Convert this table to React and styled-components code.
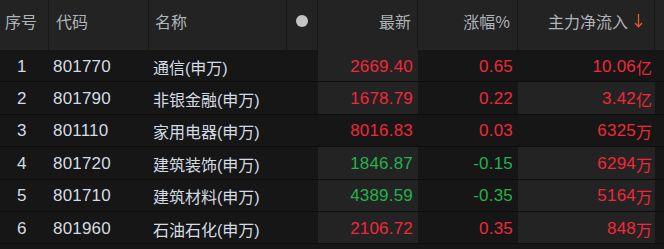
import React from "react";
import styled, { createGlobalStyle } from "styled-components";

const GlobalStyle = createGlobalStyle`
  body {
    margin: 0;
    background: #161616;
    font-family: "Liberation Sans", "Noto Sans CJK SC", sans-serif;
  }
`;

const COLS = "49px 100px 138px 31px 100px 100px 137px 9px";

const Table = styled.div`
  width: 664px;
  height: 249px;
  background: #161616;
  overflow: hidden;
`;

const HeadRow = styled.div`
  display: grid;
  grid-template-columns: ${COLS};
  height: 50px;
  background: #232323;
`;

const HeadCell = styled.div`
  display: flex;
  align-items: center;
  justify-content: ${(p) => (p.$right ? "flex-end" : p.$center ? "center" : "flex-start")};
  padding: 0 ${(p) => p.$pr || 0}px 9px ${(p) => p.$pl || 0}px;
  border-right: ${(p) => (p.$last ? "none" : "1px solid #181818")};
  color: #aeb4ba;
  font-size: 16px;
  font-family: "Noto Sans CJK SC", sans-serif;
  box-sizing: border-box;
  gap: 6px;
`;

const Dot = styled.span`
  width: 12px;
  height: 12px;
  border-radius: 50%;
  background: #c4c4c4;
`;

const Row = styled.div`
  display: grid;
  grid-template-columns: ${COLS};
  height: 32.4px;
  box-sizing: border-box;
  border-bottom: 1px solid #0e0e0e;
`;

const Cell = styled.div`
  display: flex;
  align-items: center;
  justify-content: ${(p) => (p.$right ? "flex-end" : "flex-start")};
  padding: 2px ${(p) => p.$pr || 0}px 0 ${(p) => p.$pl || 0}px;
  background: ${(p) => (p.$hl ? "#232323" : "transparent")};
  color: ${(p) => p.$color || "#d4dbe3"};
  font-size: 17px;
  letter-spacing: 0.2px;
  white-space: nowrap;
  box-sizing: border-box;
`;

const Name = styled(Cell)`
  font-size: 16px;
  letter-spacing: 0;
`;

const Unit = styled.span`
  font-size: 16px;
  font-family: "Noto Sans CJK SC", sans-serif;
  letter-spacing: 0;
`;

const RED = "#f0283a";
const GREEN = "#22b24c";

const rows = [
  { n: 1, code: "801770", name: "通信(申万)", price: "2669.40", pct: "0.65", flow: "10.06", unit: "亿", hlP: true, hlF: false },
  { n: 2, code: "801790", name: "非银金融(申万)", price: "1678.79", pct: "0.22", flow: "3.42", unit: "亿", hlP: true, hlF: true },
  { n: 3, code: "801110", name: "家用电器(申万)", price: "8016.83", pct: "0.03", flow: "6325", unit: "万", hlP: false, hlF: false },
  { n: 4, code: "801720", name: "建筑装饰(申万)", price: "1846.87", pct: "-0.15", flow: "6294", unit: "万", hlP: true, hlF: true },
  { n: 5, code: "801710", name: "建筑材料(申万)", price: "4389.59", pct: "-0.35", flow: "5164", unit: "万", hlP: true, hlF: true },
  { n: 6, code: "801960", name: "石油石化(申万)", price: "2106.72", pct: "0.35", flow: "848", unit: "万", hlP: true, hlF: true },
];

const DownArrow = () => (
  <svg width="9" height="15" viewBox="0 0 9 15" fill="none" stroke="#f0582a" strokeWidth="1.3">
    <path d="M4.5 1 V13.5" />
    <path d="M1 10 L4.5 13.8 L8 10" />
  </svg>
);

export default function App() {
  return (
    <>
      <GlobalStyle />
      <Table>
        <HeadRow>
          <HeadCell $pl={5}>序号</HeadCell>
          <HeadCell $pl={7}>代码</HeadCell>
          <HeadCell $pl={6}>名称</HeadCell>
          <HeadCell $center>
            <Dot />
          </HeadCell>
          <HeadCell $right $pr={6}>最新</HeadCell>
          <HeadCell $right $pr={7}>涨幅%</HeadCell>
          <HeadCell $right $pr={11}>
            主力净流入 <DownArrow />
          </HeadCell>
          <HeadCell $last />
        </HeadRow>
        {rows.map((r) => {
          const c = r.pct.startsWith("-") ? GREEN : RED;
          return (
            <Row key={r.n}>
              <Cell $pl={17}>{r.n}</Cell>
              <Cell $pl={4}>{r.code}</Cell>
              <Name $pl={4}>{r.name}</Name>
              <Cell />
              <Cell $right $pr={5} $hl={r.hlP} $color={c}>{r.price}</Cell>
              <Cell $right $pr={5} $color={c}>{r.pct}</Cell>
              <Cell $right $pr={3} $hl={r.hlF} $color={RED}>
                {r.flow}
                <Unit>{r.unit}</Unit>
              </Cell>
              <Cell />
            </Row>
          );
        })}
      </Table>
    </>
  );
}
